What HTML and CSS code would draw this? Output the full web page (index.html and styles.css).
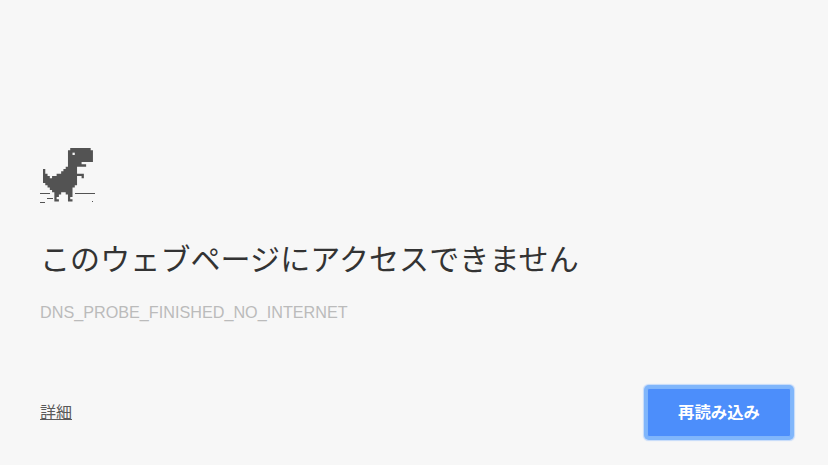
FILE: index.html
```html
<!DOCTYPE html>
<html lang="ja">
<head>
<meta charset="utf-8">
<title>このウェブページにアクセスできません</title>
<link rel="stylesheet" href="styles.css">
</head>
<body>
<main class="page">
  <div class="content">
    <svg class="dino" width="56" height="56" viewBox="0 0 56 56" aria-hidden="true">
      <g transform="translate(3 1) scale(2.27 2.33)" fill="#535353">
        <path d="M12 0H21V1H22V6H17V7H19V8H15V11H18V13H17V12H15V16H14V17H13V21H12V22H13V23H11V20H10V19H8V20H7V21H6V22H7V23H5V19H4V18H3V17H2V16H1V15H0V9H1V11H2V12H3V13H4V12H6V11H8V10H9V9H10V8H11V1H12Z"/>
        <rect x="13" y="2" width="1" height="1" fill="#f7f7f7"/>
      </g>
      <path fill="#535353" d="M0 46h10v1H0zM35 46h20v1H35zM7 51h6v1H7zM0 55h5v1H0zM52 54h1v1h-1z"/>
    </svg>
    <h1 class="title">このウェブページにアクセスできません</h1>
    <p class="code">DNS_PROBE_FINISHED_NO_INTERNET</p>
  </div>
  <div class="actions">
    <a class="details" href="#">詳細</a>
    <button class="reload" type="button">再読み込み</button>
  </div>
</main>
</body>
</html>
```
FILE: styles.css
```css
html, body {
  margin: 0;
  height: 100%;
  background: #f7f7f7;
}
.page {
  box-sizing: border-box;
  height: 465px;
  padding: 147px 37px 28px 40px;
  display: flex;
  flex-direction: column;
  justify-content: space-between;
  font-family: "Liberation Sans", "Noto Sans CJK JP", sans-serif;
}
.dino { display: block; }
.title {
  margin: 38px 0 0;
  font-size: 30px;
  line-height: 38px;
  letter-spacing: 0.1px;
  font-weight: 400;
  color: #333;
}
.code {
  margin: 23px 0 0;
  font-size: 16.2px;
  line-height: 20px;
  color: #bbb;
}
.actions {
  display: flex;
  justify-content: space-between;
  align-items: center;
}
.details {
  margin-bottom: 3px;
  font-size: 16px;
  color: #5a5a5a;
}
.reload {
  width: 144px;
  height: 49px;
  box-sizing: border-box;
  padding: 0 6px 4px;
  border: 1px solid #7fb4fb;
  border-radius: 2px;
  box-shadow: 0 0 0 3px #80b6fb, 0 0 1px 4px #c4dafa;
  background: #4c8efb;
  color: #fff;
  font: 700 16.4px "Liberation Sans", "Noto Sans CJK JP", sans-serif;
}
```
